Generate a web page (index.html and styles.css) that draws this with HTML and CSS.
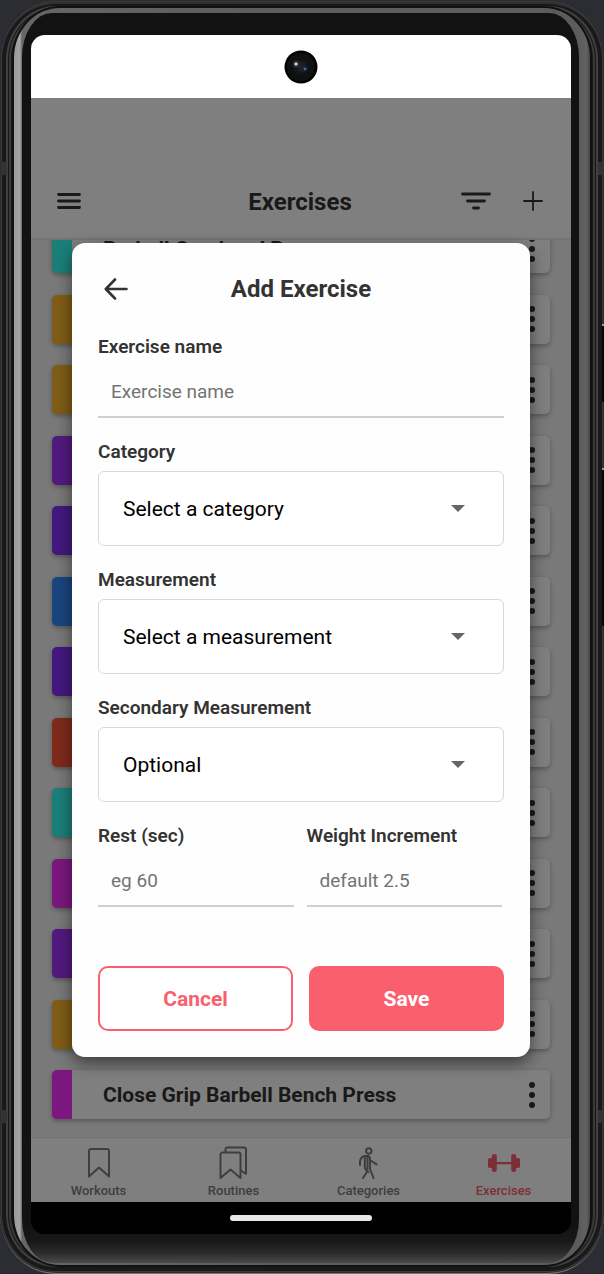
FILE: index.html
```html
<!DOCTYPE html>
<html lang="en">
<head>
<meta charset="utf-8">
<meta name="viewport" content="width=device-width, initial-scale=1">
<title>Exercises</title>
<link rel="stylesheet" href="styles.css">
</head>
<body>
<svg class="sprite" aria-hidden="true">
  <symbol id="dots" viewBox="0 0 6 26"><circle cx="3" cy="3" r="3"/><circle cx="3" cy="13" r="3"/><circle cx="3" cy="23" r="3"/></symbol>
  <symbol id="caret" viewBox="0 0 14 7"><path d="M0 0h14L7 7z"/></symbol>
</svg>
<div class="device">
  <span class="seam seam-left-top"></span><span class="seam seam-left-bottom"></span>
  <span class="seam seam-right-top"></span><span class="seam seam-right-bottom"></span>
  <span class="key key-power"></span><span class="key key-volume"></span>
  <div class="rim">
    <div class="glass">
      <div class="screen">
        <div class="status">
          <svg class="camera" viewBox="0 0 34 34" aria-hidden="true">
            <defs><radialGradient id="lens"><stop offset="0" stop-color="#23262f"/><stop offset="1" stop-color="#111214"/></radialGradient></defs>
            <circle cx="17" cy="17" r="16.500" fill="#030303"/><circle cx="17" cy="17" r="14" fill="#101010"/>
            <circle cx="17" cy="17" r="8" fill="url(#lens)"/>
            <circle cx="12" cy="14" r="3" fill="#59606c" opacity=".6"/><circle cx="12" cy="14" r="1.300" fill="#e8f4f4"/>
            <circle cx="21" cy="19" r="2" fill="#17375c"/><circle cx="21" cy="19" r=".8" fill="#69b8ee"/>
          </svg>
        </div>
        <div class="app">
          <header class="topbar">
            <div class="side">
              <button class="icon-btn" aria-label="Menu"><svg width="24" height="18" viewBox="0 0 24 18"><path d="M1.500 2.500h21M1.500 9h21M1.500 15.500h21" stroke-width="2.800"/></svg></button>
            </div>
            <h1>Exercises</h1>
            <div class="side side-end">
              <button class="icon-btn" aria-label="Filter"><svg width="30" height="18" viewBox="0 0 30 18"><path d="M1.500 2h27M6.500 9h17M12.500 16h5" stroke-width="2.800"/></svg></button>
              <button class="icon-btn" aria-label="Add"><svg width="20" height="20" viewBox="0 0 20 20"><path d="M10 1v18M1 10h18" stroke-width="1.800"/></svg></button>
            </div>
          </header>
          <main class="list">
            <article class="card teal"><h2>Barbell Overhead Press</h2><button class="icon-btn" aria-label="Options"><svg class="dots"><use href="#dots"/></svg></button></article>
            <article class="card gold"><button class="icon-btn" aria-label="Options"><svg class="dots"><use href="#dots"/></svg></button></article>
            <article class="card gold"><button class="icon-btn" aria-label="Options"><svg class="dots"><use href="#dots"/></svg></button></article>
            <article class="card purple"><button class="icon-btn" aria-label="Options"><svg class="dots"><use href="#dots"/></svg></button></article>
            <article class="card indigo"><button class="icon-btn" aria-label="Options"><svg class="dots"><use href="#dots"/></svg></button></article>
            <article class="card blue"><button class="icon-btn" aria-label="Options"><svg class="dots"><use href="#dots"/></svg></button></article>
            <article class="card indigo"><button class="icon-btn" aria-label="Options"><svg class="dots"><use href="#dots"/></svg></button></article>
            <article class="card red"><button class="icon-btn" aria-label="Options"><svg class="dots"><use href="#dots"/></svg></button></article>
            <article class="card teal"><button class="icon-btn" aria-label="Options"><svg class="dots"><use href="#dots"/></svg></button></article>
            <article class="card magenta"><button class="icon-btn" aria-label="Options"><svg class="dots"><use href="#dots"/></svg></button></article>
            <article class="card purple"><button class="icon-btn" aria-label="Options"><svg class="dots"><use href="#dots"/></svg></button></article>
            <article class="card gold"><button class="icon-btn" aria-label="Options"><svg class="dots"><use href="#dots"/></svg></button></article>
            <article class="card magenta"><h2>Close Grip Barbell Bench Press</h2><button class="icon-btn" aria-label="Options"><svg class="dots"><use href="#dots"/></svg></button></article>
          </main>
          <nav class="tabs">
            <a href="#workouts"><svg viewBox="0 0 34 34"><path d="M7 31.500V6a2 2 0 0 1 2-2h16a2 2 0 0 1 2 2v25.500l-10-9z"/></svg>Workouts</a>
            <a href="#routines"><svg viewBox="0 0 34 34"><path d="M3.500 33V9.500a2 2 0 0 1 2-2h16a2 2 0 0 1 2 2V33l-10-8.500z"/><path d="M8.500 7V4.500a2 2 0 0 1 2-2H27a2 2 0 0 1 2 2V29l-5-3.500"/></svg>Routines</a>
            <a href="#categories"><svg viewBox="0 0 34 34"><circle cx="16.800" cy="6" r="2.700"/><path d="M8 20v-4q1-4.500 5-5h3q2 .5 2 3v10l3.500 9M12.800 12v10q.3 3 3.500 5M15.500 12v12M14.500 27.500 11 33M19.500 16l5 3.300"/></svg>Categories</a>
            <a class="active" href="#exercises"><svg viewBox="0 0 34 34"><g class="solid"><rect x="1" y="13" width="6" height="10" rx="1.800"/><rect x="4.800" y="9" width="5" height="18" rx="2.300"/><rect x="8" y="17" width="18" height="2.200"/><rect x="24.200" y="9" width="5" height="18" rx="2.300"/><rect x="27" y="13" width="6" height="10" rx="1.800"/></g></svg>Exercises</a>
          </nav>
          <div class="overlay">
            <form class="dialog" role="dialog" aria-labelledby="dialog-title">
              <div class="dialog-head">
                <button type="button" class="icon-btn" aria-label="Back"><svg width="24" height="22" viewBox="0 0 24 22"><path d="M11 1.500 1.800 11l9.200 9.500M2 11h20.500" stroke-width="2.600"/></svg></button>
                <h2 id="dialog-title">Add Exercise</h2>
              </div>
              <div class="field"><label for="name">Exercise name</label><input id="name" type="text" placeholder="Exercise name"></div>
              <div class="field"><label for="category">Category</label>
                <div class="picker"><select id="category"><option>Select a category</option></select><svg><use href="#caret"/></svg></div></div>
              <div class="field"><label for="measure">Measurement</label>
                <div class="picker"><select id="measure"><option>Select a measurement</option></select><svg><use href="#caret"/></svg></div></div>
              <div class="field"><label for="second">Secondary Measurement</label>
                <div class="picker"><select id="second"><option>Optional</option></select><svg><use href="#caret"/></svg></div></div>
              <div class="pair">
                <div class="field"><label for="rest">Rest (sec)</label><input id="rest" type="text" placeholder="eg 60"></div>
                <div class="field"><label for="inc">Weight Increment</label><input id="inc" type="text" placeholder="default 2.5"></div>
              </div>
              <div class="actions"><button type="button" class="btn">Cancel</button><button type="button" class="btn primary">Save</button></div>
            </form>
          </div>
        </div>
        <div class="gesture"><span></span></div>
      </div>
    </div>
  </div>
</div>
</body>
</html>
```
FILE: styles.css
```css
* { box-sizing: border-box; }
body { margin: 0; background: #2b2d33; font-family: Roboto, "Liberation Sans", sans-serif; color: #333; }
h1, h2 { margin: 0; font-weight: 700; }
.sprite { position: absolute; width: 0; height: 0; }

/* Phone body */
.device {
  position: relative; display: flex; min-height: 100vh; padding: 8px 14px 8px 14px;
  border-radius: 56px / 60px; background: #171717; border-bottom: 1px solid #777;
  box-shadow: inset 0 0 0 1px #2b2d33, inset 0 0 0 2px #3a3a3a, inset 0 4px 0 #303030, inset 0 0 0 6px #191919, inset 0 0 0 8px #404040, inset 0 0 0 9px #181818, inset 0 0 0 11px #393939;
}
.rim {
  flex: 1; display: flex; padding: 5px 11px 2px 8px; border-radius: 46px / 50px;
  background: linear-gradient(90deg, #999 0, #a3a3a3 6px, #666 8px, #5c5c5c 50%, #5c5c5c calc(100% - 11px), #626262 calc(100% - 4px), #4a4a4a 100%);
  box-shadow: 0 0 0 2px #111;
}
.glass {
  flex: 1; display: flex; padding: 22px 8px 29px 9px; border-radius: 30px / 44px;
  background: linear-gradient(0deg, #4a4a4a 0, #2b2b2b 10px, #181818 22px, #121212 40px);
}
.screen { flex: 1; display: flex; flex-direction: column; min-width: 0; border-radius: 14px; overflow: hidden; background: #000; }
.seam { position: absolute; width: 6px; height: 13px; background: #333; }
.seam-left-top { left: 1px; top: 162px; }
.seam-left-bottom { left: 1px; bottom: 150px; }
.seam-right-top { right: 0; top: 162px; }
.seam-right-bottom { right: 0; bottom: 150px; }
.key { position: absolute; right: 0; width: 2px; background: #050505; border-top: 2px solid #999; }
.key-power { top: 324px; height: 78px; }
.key-volume { top: 468px; height: 158px; }

.status { height: 63px; display: flex; align-items: center; justify-content: center; background: #fff; }
.camera { width: 34px; height: 34px; }
.gesture { height: 32px; display: flex; align-items: center; justify-content: center; background: #000; }
.gesture span { width: 142px; height: 6px; border-radius: 3px; background: #e8e8e8; }

/* App */
.app { position: relative; flex: 1; display: flex; flex-direction: column; min-height: 0; background: #f3f3f3; }
.icon-btn { display: flex; padding: 0; border: 0; background: none; color: #333; cursor: pointer; }
.icon-btn svg { fill: none; stroke: currentColor; stroke-linecap: round; stroke-linejoin: round; }
.topbar {
  display: grid; grid-template-columns: 1fr auto 1fr; align-items: center;
  height: 142px; padding: 65px 28px 0 26px; background: #fff; border-bottom: 2px solid #e8e8e8;
}
.topbar h1 { padding-top: 2px; font-size: 24px; line-height: 32px; }
.side { display: flex; align-items: center; gap: 32px; }
.side-end { justify-content: flex-end; }

.list { flex: 1; display: flex; flex-direction: column; justify-content: space-between; min-height: 0; overflow: hidden; padding: 0 21px 18px; }
.card {
  flex: none; display: flex; align-items: center; justify-content: space-between; height: 49px;
  padding: 0 15px 0 31px; border-left: 20px solid; border-radius: 5px;
  background: #fff; box-shadow: 0 2px 5px rgba(0, 0, 0, .3);
}
.card:first-child { margin-top: -16px; }
.card h2 { font-size: 21px; line-height: 30px; color: #333; }
.card .icon-btn { margin-left: auto; }
.icon-btn .dots { width: 6px; height: 26px; fill: #333; stroke: none; }
.teal { border-color: #36fff2; }
.gold { border-color: #feba2e; }
.purple { border-color: #a434fe; }
.indigo { border-color: #8630fe; }
.blue { border-color: #368aff; }
.red { border-color: #ff5634; }
.magenta { border-color: #f62eff; }

.tabs { display: grid; grid-template-columns: repeat(4, 1fr); height: 65px; padding-top: 7px; background: #fff; border-top: 1px solid #e4e4e4; }
.tabs a { display: flex; flex-direction: column; align-items: center; gap: 3px; color: #7c7c7c; font-size: 13px; line-height: 18px; font-weight: 500; text-decoration: none; }
.tabs svg { width: 34px; height: 34px; fill: none; stroke: currentColor; stroke-width: 2; stroke-linejoin: round; stroke-linecap: round; }
.tabs .active { color: #fa5f6d; }
.tabs .solid { fill: currentColor; stroke: none; }

/* Dialog */
.overlay { position: absolute; inset: 0; display: flex; align-items: center; padding: 0 41px; background: rgba(0, 0, 0, .5); }
.dialog { flex: 1; min-width: 0; padding: 26px; border-radius: 13px; background: #fefefe; box-shadow: 0 6px 16px rgba(0, 0, 0, .5); }
.dialog-head { display: grid; grid-template-columns: 1fr auto 1fr; align-items: center; margin-bottom: 26px; padding-left: 6px; padding-right: 6px; }
.dialog-head h2 { font-size: 24px; line-height: 40px; }
.field { display: flex; flex-direction: column; gap: 7px; min-width: 0; margin-bottom: 22px; }
.field label { font-size: 19px; line-height: 24px; font-weight: 600; }
.field input {
  width: 100%; height: 52px; padding: 0 13px; border: 0; border-bottom: 2px solid #d0d0d0; border-radius: 0;
  background: none; font: 400 19px/24px Roboto, "Liberation Sans", sans-serif; color: #000;
}
.field input::placeholder { color: #737373; opacity: 1; }
.picker { display: grid; align-items: center; }
.picker select {
  grid-area: 1 / 1; width: 100%; height: 75px; padding: 0 60px 0 24px; appearance: none;
  border: 1px solid #d8d8d8; border-radius: 6px; background: #fff;
  font: 400 21px/28px Roboto, "Liberation Sans", sans-serif; color: #000;
}
.picker svg { grid-area: 1 / 1; justify-self: end; width: 14px; height: 7px; margin-right: 39px; fill: #666; pointer-events: none; }
.pair { display: grid; grid-template-columns: 1fr 1fr; gap: 13px; padding-right: 2px; }
.pair .field { margin-bottom: 0; }
.actions { display: grid; grid-template-columns: 1fr 1fr; gap: 16px; margin-top: 59px; }
.btn {
  height: 65px; border: 2px solid #fa5f6d; border-radius: 10px; background: #fff; color: #fa5f6d;
  font: 700 21px/28px Roboto, "Liberation Sans", sans-serif; cursor: pointer;
}
.btn.primary { background: #fa5f6d; color: #fff; }
```
